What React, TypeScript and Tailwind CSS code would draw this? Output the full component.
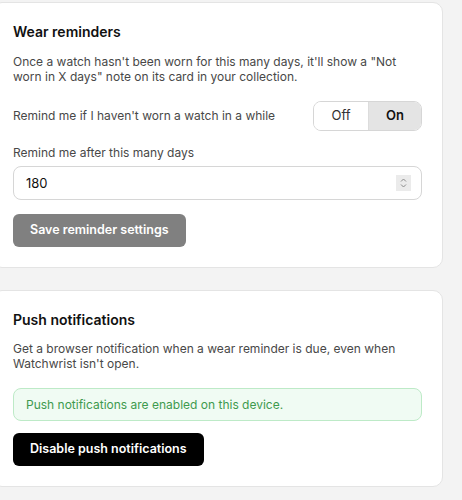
import React, { useState } from "react";

function Spinner() {
  return (
    <svg className="absolute right-[11px] top-1/2 -translate-y-1/2" width="15" height="16" viewBox="0 0 15 16">
      <rect width="15" height="16" fill="#ebebeb" />
      <path d="M5 6.5 L7.5 4 L10 6.5" fill="none" stroke="#8a8a8a" strokeWidth="1" />
      <path d="M5 9.5 L7.5 12 L10 9.5" fill="none" stroke="#8a8a8a" strokeWidth="1" />
    </svg>
  );
}

export default function App() {
  const [enabled, setEnabled] = useState(true);
  const [days, setDays] = useState("180");

  return (
    <div className="min-h-[500px] w-[462px] overflow-hidden bg-[#f3f3f3] pt-[2px] font-['Inter',sans-serif] text-[12px] text-[#484848]">
      {/* Wear reminders */}
      <div className="-ml-2 w-[451px] rounded-[10px] border border-[#e4e4e4] bg-white p-5">
        <h2 className="text-[14px] leading-[18px] font-semibold text-[#111]">Wear reminders</h2>
        <p className="mt-[13px] leading-[15px]">
          Once a watch hasn't been worn for this many days, it'll show a "Not worn in X days" note on its card in your collection.
        </p>

        <div className="mt-[17px] flex items-center justify-between">
          <span>Remind me if I haven't worn a watch in a while</span>
          <div className="flex h-[30px] overflow-hidden rounded-lg border border-[#d6d6d6] text-[13px]">
            <button
              onClick={() => setEnabled(false)}
              className={`w-[54px] ${!enabled ? "bg-[#e4e4e4] font-semibold text-[#111]" : "bg-white text-[#333]"}`}
            >
              Off
            </button>
            <button
              onClick={() => setEnabled(true)}
              className={`w-[53px] border-l border-[#dcdcdc] ${enabled ? "bg-[#e4e4e4] font-semibold text-[#111]" : "bg-white text-[#333]"}`}
            >
              On
            </button>
          </div>
        </div>

        <label className="mt-[14px] block leading-[15px]">Remind me after this many days</label>
        <div className="relative mt-[6px]">
          <input
            type="text"
            value={days}
            onChange={(e) => setDays(e.target.value)}
            className="h-[34px] w-full rounded-lg border border-[#d6d6d6] bg-white px-3 text-[13px] text-[#111] outline-none"
          />
          <Spinner />
        </div>

        <button className="mt-[14px] h-[33px] rounded-md bg-[#808080] px-[17px] text-[12.5px] font-semibold text-white">
          Save reminder settings
        </button>
      </div>

      {/* Push notifications */}
      <div className="-ml-2 mt-[22px] w-[451px] rounded-[10px] border border-[#e4e4e4] bg-white p-5">
        <h2 className="text-[14px] leading-[18px] font-semibold text-[#111]">Push notifications</h2>
        <p className="mt-3 leading-[15px]">
          Get a browser notification when a wear reminder is due, even when Watchwrist isn't open.
        </p>

        <div className="mt-[17px] flex h-[33px] items-center rounded-lg border border-[#bdeac7] bg-[#f0fbf3] px-3 text-[#3e9a4e]">
          Push notifications are enabled on this device.
        </div>

        <button className="mt-3 h-[33px] rounded-md bg-black px-[17px] text-[12.5px] font-semibold text-white">
          Disable push notifications
        </button>
      </div>
    </div>
  );
}
